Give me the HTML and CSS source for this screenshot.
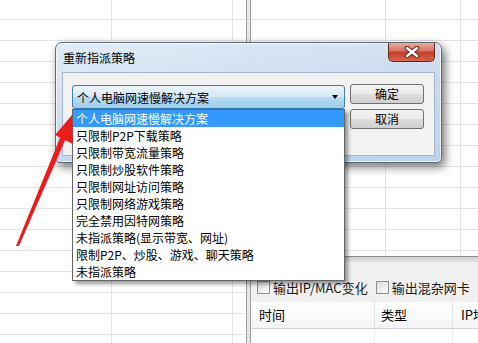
FILE: index.html
```html
<!DOCTYPE html>
<html lang="zh-CN">
<head>
    <meta charset="UTF-8">
    <title>重新指派策略</title>
    <link rel="stylesheet" href="styles.css">
</head>
<body>
    <div class="desk">
        <div class="pane-left"></div>
        <div class="splitter"></div>
        <div class="pane-right">
            <div class="grid-right"></div>
            <div class="log-panel">
                <div class="log-top"></div>
                <div class="log-opts">
                    <span class="opt"><span class="chk"></span>输出IP/MAC变化</span>
                    <span class="opt"><span class="chk"></span>输出混杂网卡</span>
                    <span class="opt"><span class="chk"></span></span>
                </div>
                <div class="log-head">
                    <span class="col col-time">时间</span>
                    <span class="col col-type">类型</span>
                    <span class="col col-ip">IP地址</span>
                </div>
                <div class="log-body"></div>
            </div>
        </div>
    </div>

    <div class="dialog">
        <div class="title">重新指派策略</div>
        <div class="close-btn">
            <svg width="16" height="12" viewBox="0 0 16 12">
                <path d="M3 2 L13 10 M13 2 L3 10" stroke="#5a2418" stroke-width="4.5" stroke-linecap="round"/>
                <path d="M3 2 L13 10 M13 2 L3 10" stroke="#ffffff" stroke-width="2.5" stroke-linecap="round"/>
            </svg>
        </div>
        <div class="client">
            <div class="combo-wrap">
                <div class="combo">
                    <span>个人电脑网速慢解决方案</span>
                    <span class="combo-arrow"></span>
                </div>
                <ul class="dropdown">
                    <li class="selected">个人电脑网速慢解决方案</li>
                    <li>只限制P2P下载策略</li>
                    <li>只限制带宽流量策略</li>
                    <li>只限制炒股软件策略</li>
                    <li>只限制网址访问策略</li>
                    <li>只限制网络游戏策略</li>
                    <li>完全禁用因特网策略</li>
                    <li>未指派策略(显示带宽、网址)</li>
                    <li>限制P2P、炒股、游戏、聊天策略</li>
                    <li>未指派策略</li>
                </ul>
            </div>
            <div class="btn-col">
                <div class="btn">确定</div>
                <div class="btn">取消</div>
            </div>
        </div>
    </div>

    <svg class="arrow" width="478" height="343" viewBox="0 0 478 343">
        <polygon points="16,246 19,246 67,136 62,133" fill="#ec1c1c"/>
        <polygon points="72,115 55,135 73,144" fill="#ec1c1c"/>
    </svg>
</body>
</html>
```

FILE: styles.css
```css
html, body {
    margin: 0;
    padding: 0;
}
body {
    width: 478px;
    height: 343px;
    overflow: hidden;
    position: relative;
    background: #ffffff;
    font-family: "Noto Sans CJK SC", "Liberation Sans", sans-serif;
    font-size: 12px;
    color: #000;
}
.desk {
    display: flex;
    height: 343px;
}
.pane-left {
    flex: none;
    width: 246px;
    background-image:
        linear-gradient(#e4e4e4 1px, transparent 1px),
        linear-gradient(to right, transparent 111px, #e4e4e4 111px, #e4e4e4 112px, transparent 112px,
            transparent 232px, #e4e4e4 232px, #e4e4e4 233px, transparent 233px);
    background-size: 100% 21px, 100% 100%;
    background-position: 0 19px, 0 0;
}
.splitter {
    flex: none;
    width: 3px;
    background: #e6e6e6;
    border-left: 1px solid #9c9c9c;
    border-right: 1px solid #9c9c9c;
}
.pane-right {
    flex: 1;
    min-width: 0;
    overflow: hidden;
    display: flex;
    flex-direction: column;
}
.grid-right {
    height: 256px;
    background-image:
        linear-gradient(#e4e4e4 1px, transparent 1px),
        linear-gradient(to right, transparent 134px, #e4e4e4 134px, #e4e4e4 135px, transparent 135px,
            transparent 209px, #e4e4e4 209px, #e4e4e4 210px, transparent 210px);
    background-size: 100% 21px, 100% 100%;
    background-position: 0 19px, 0 0;
}
.log-panel {
    flex: 1;
    display: flex;
    flex-direction: column;
    background: #f0f0f0;
    border-top: 1px solid #8e8e8e;
}
.log-top {
    height: 5px;
    background: linear-gradient(#cfcfcf, #e2e2e2);
}
.log-opts {
    height: 40px;
    display: flex;
    align-items: flex-end;
    padding: 0 0 5px 6px;
    box-sizing: border-box;
    gap: 8px;
    white-space: nowrap;
}
.opt {
    display: flex;
    align-items: center;
    gap: 3px;
    font-size: 13px;
    color: #1a1a1a;
}
.chk {
    width: 11px;
    height: 11px;
    border: 1px solid #8f8f8f;
    background: linear-gradient(135deg, #dcdcdc, #fbfbfb);
}
.log-head {
    height: 26px;
    display: flex;
    background: linear-gradient(#ffffff, #f4f5f7);
    border-bottom: 1px solid #d5d5d5;
    white-space: nowrap;
}
.col {
    flex: none;
    line-height: 26px;
    font-size: 13px;
    padding-left: 8px;
    box-sizing: border-box;
    border-right: 1px solid #e2e3e5;
}
.col-time {
    width: 124px;
}
.col-type {
    width: 78px;
    padding-left: 6px;
}
.col-ip {
    flex: 1;
    border-right: none;
}
.log-body {
    flex: 1;
    background:
        linear-gradient(to right, transparent 123px, #eeeeee 123px, #eeeeee 124px, transparent 124px,
            transparent 201px, #eeeeee 201px, #eeeeee 202px, transparent 202px), #ffffff;
}

/* 对话框 */
.dialog {
    position: absolute;
    left: 55px;
    top: 42px;
    width: 387px;
    height: 121px;
    box-sizing: border-box;
    border: 1px solid #5d6b7c;
    border-radius: 7px 7px 5px 5px;
    background: linear-gradient(170deg, rgba(226, 236, 248, 0.97), rgba(196, 214, 236, 0.95) 60%, rgba(186, 208, 234, 0.95));
    box-shadow: 3px 4px 10px rgba(0, 0, 0, 0.55), inset 0 0 0 1px rgba(255, 255, 255, 0.7);
    display: flex;
    flex-direction: column;
}
.title {
    height: 29px;
    line-height: 30px;
    padding-left: 7px;
    font-size: 12px;
    color: #000;
}
.close-btn {
    position: absolute;
    right: 6px;
    top: 0;
    width: 47px;
    height: 19px;
    box-sizing: border-box;
    border: 1px solid #6a2a1e;
    border-top: none;
    border-radius: 0 0 5px 5px;
    background: linear-gradient(#e9a99b, #d5735f 45%, #c23d24 50%, #d4664c);
    display: flex;
    align-items: center;
    justify-content: center;
}
.client {
    flex: 1;
    margin: 0 6px 6px 6px;
    background: #f2f2f2;
    border: 1px solid #a3b8d0;
    display: flex;
    gap: 5px;
    padding: 12px 0 0 9px;
}
.combo-wrap {
    position: relative;
    width: 273px;
    height: 24px;
}
.combo {
    height: 24px;
    box-sizing: border-box;
    border: 1px solid #3c7fb1;
    border-radius: 3px;
    background: linear-gradient(#edf5fb, #d2e8f6 50%, #b9dcf2 52%, #9ccbe9);
    display: flex;
    align-items: center;
    justify-content: space-between;
    padding: 0 6px 0 4px;
    font-size: 12px;
}
.combo-arrow {
    width: 0;
    height: 0;
    border-left: 3.5px solid transparent;
    border-right: 3.5px solid transparent;
    border-top: 4px solid #000;
}
.dropdown {
    position: absolute;
    top: 24px;
    left: 0;
    width: 273px;
    box-sizing: border-box;
    margin: 0;
    padding: 0;
    list-style: none;
    background: #fff;
    border: 1px solid #646464;
    box-shadow: 3px 3px 4px rgba(0, 0, 0, 0.4);
    z-index: 2;
}
.dropdown li {
    height: 17px;
    line-height: 17px;
    padding-left: 3px;
    font-size: 12px;
    white-space: nowrap;
    overflow: hidden;
}
.dropdown li.selected {
    background: #3399ff;
    color: #fff;
}
.btn-col {
    display: flex;
    flex-direction: column;
    gap: 5px;
    margin-top: -1px;
}
.btn {
    width: 74px;
    height: 20px;
    box-sizing: border-box;
    border: 1px solid #707070;
    border-radius: 3px;
    background: linear-gradient(#f3f3f3, #ebebeb 50%, #dddddd 50%, #cfcfcf);
    text-align: center;
    line-height: 18px;
    font-size: 12px;
}
.arrow {
    position: absolute;
    left: 0;
    top: 0;
    pointer-events: none;
    z-index: 5;
}
```
